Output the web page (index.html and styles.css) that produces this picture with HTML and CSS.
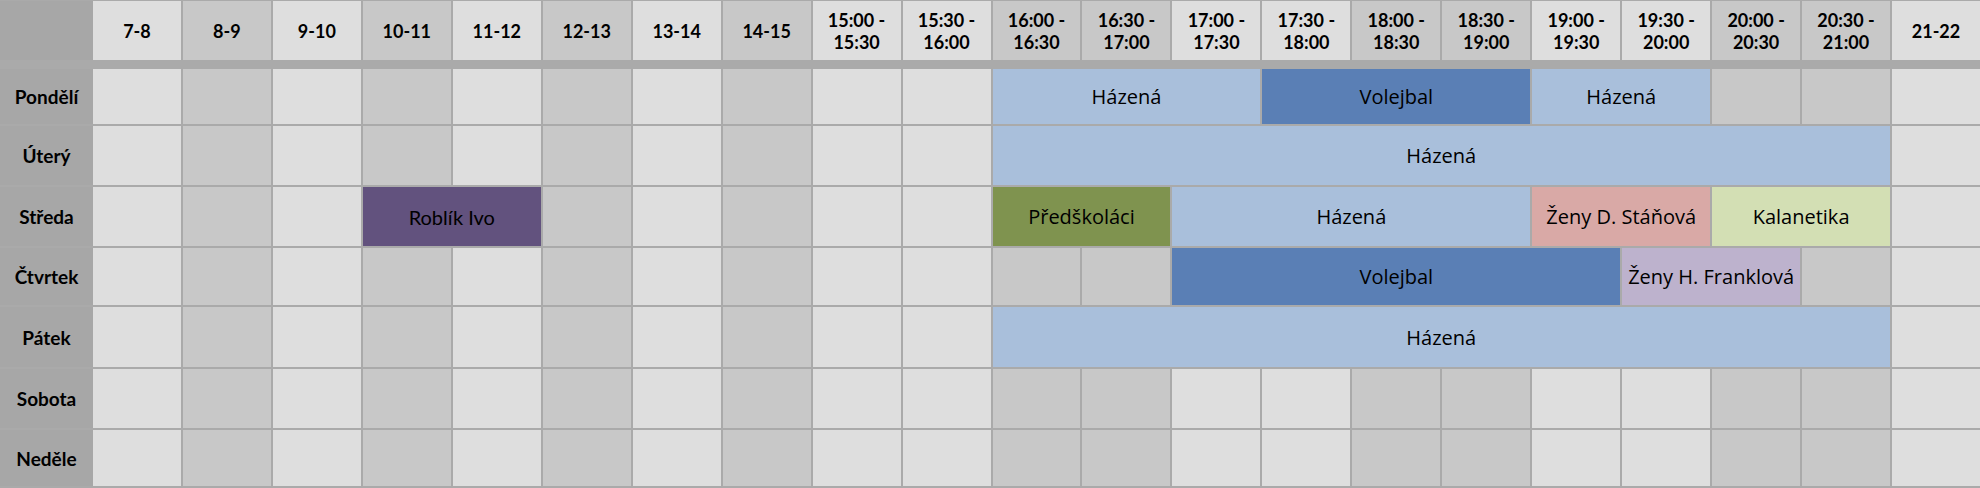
FILE: index.html
```html
<!DOCTYPE html>
<html lang="cs">
<head>
    <meta charset="UTF-8">
    <title>Rozvrh tělocvičny</title>
    <link rel="stylesheet" href="styles.css">
</head>
<body>

    <div class="schedule">
        <div class="head" id="head"></div>
        <div class="body" id="body"></div>
    </div>

    <script>
        const slots = [
            '7-8', '8-9', '9-10', '10-11', '11-12', '12-13', '13-14', '14-15',
            '15:00 -|15:30', '15:30 -|16:00', '16:00 -|16:30', '16:30 -|17:00',
            '17:00 -|17:30', '17:30 -|18:00', '18:00 -|18:30', '18:30 -|19:00',
            '19:00 -|19:30', '19:30 -|20:00', '20:00 -|20:30', '20:30 -|21:00', '21-22'
        ];
        const darkCols = [1, 3, 5, 7, 10, 11, 14, 15, 18, 19];

        // [first slot, span, label, class]
        const days = [
            ['Pondělí', [[10, 3, 'Házená', 'hazena'], [13, 3, 'Volejbal', 'volejbal'], [16, 2, 'Házená', 'hazena']]],
            ['Úterý', [[10, 10, 'Házená', 'hazena']]],
            ['Středa', [[3, 2, 'Roblík Ivo', 'roblik'], [10, 2, 'Předškoláci', 'predskolaci'], [12, 4, 'Házená', 'hazena'],
                        [16, 2, 'Ženy D. Stáňová', 'zeny-d'], [18, 2, 'Kalanetika', 'kalanetika']]],
            ['Čtvrtek', [[12, 5, 'Volejbal', 'volejbal'], [17, 2, 'Ženy H. Franklová', 'zeny-h']]],
            ['Pátek', [[10, 10, 'Házená', 'hazena']]],
            ['Sobota', []],
            ['Neděle', []]
        ];

        const head = document.getElementById('head');
        const body = document.getElementById('body');

        function cell(parent, cls, html) {
            const el = document.createElement('div');
            el.className = cls;
            if (html) el.innerHTML = html;
            parent.appendChild(el);
            return el;
        }

        cell(head, 'day');
        slots.forEach((slot, i) => {
            const cls = darkCols.includes(i) ? 'slot dark' : 'slot';
            cell(head, cls, slot.split('|').join('<br>'));
        });

        days.forEach(([name, events]) => {
            cell(body, 'day', name);
            let i = 0;
            while (i < slots.length) {
                const ev = events.find(e => e[0] === i);
                if (ev) {
                    const el = cell(body, 'event ' + ev[3], ev[2]);
                    el.style.gridColumn = 'span ' + ev[1];
                    i += ev[1];
                } else {
                    cell(body, darkCols.includes(i) ? 'cell dark' : 'cell');
                    i++;
                }
            }
        });
    </script>
</body>
</html>
```

FILE: styles.css
```css
body {
    margin: 0;
    background-color: #fff;
    font-family: Lato, "Open Sans", sans-serif;
    color: #000;
}

.schedule {
    width: 1980px;
    height: 488px;
    box-sizing: border-box;
    padding-top: 1px;
    padding-bottom: 2px;
    background-color: #aaaaaa;
}

.head,
.body {
    display: grid;
    grid-template-columns: 91px repeat(21, 1fr);
    column-gap: 2px;
}

.head {
    grid-template-rows: 59px;
    margin-bottom: 9px;
}

.body {
    grid-template-rows: 55px 59px 59px 57px 60px 59px 56px;
    row-gap: 2px;
}

.day {
    display: flex;
    align-items: center;
    justify-content: center;
    background-color: #a7a7a7;
    font-size: 19px;
    font-weight: bold;
    color: #000;
    margin-right: -2px;
}

.slot,
.cell {
    background-color: #dedede;
}

.slot.dark,
.cell.dark {
    background-color: #c8c8c8;
}

.slot {
    display: flex;
    align-items: center;
    justify-content: center;
    text-align: center;
    font-size: 18px;
    font-weight: bold;
    line-height: 22px;
    color: #000;
}

.event {
    display: flex;
    align-items: center;
    justify-content: center;
    font-family: "Open Sans", sans-serif;
    font-size: 20px;
    font-weight: 500;
    color: #000;
    white-space: nowrap;
}

.hazena { background-color: #a9bfdb; }
.volejbal { background-color: #5a7fb5; }
.predskolaci { background-color: #7f934f; }
.zeny-d { background-color: #d9a9a6; }
.kalanetika { background-color: #d3dfb4; }
.zeny-h { background-color: #bdb2cd; }

.roblik {
    background-color: #62527e;
    font-family: Lato, sans-serif;
    font-weight: normal;
}
```
